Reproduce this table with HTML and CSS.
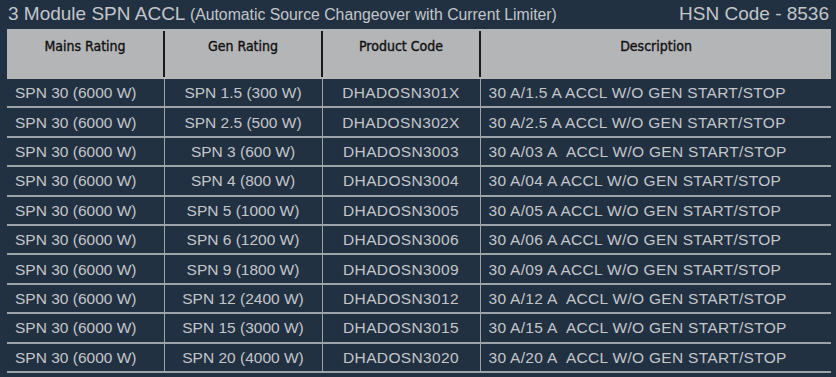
FILE: index.html
```html
<!DOCTYPE html>
<html>
<head>
<meta charset="utf-8">
<link rel="stylesheet" href="styles.css">
</head>
<body>
<div class="page">
  <div class="title-bar">
    <div class="title"><span class="big">3 Module SPN ACCL</span> <span class="small">(Automatic Source Changeover with Current Limiter)</span></div>
    <div class="hsn">HSN Code - 8536</div>
  </div>
  <table class="grid">
    <colgroup>
      <col class="c1"><col class="c2"><col class="c3"><col class="c4">
    </colgroup>
    <thead>
      <tr>
        <th><span class="th-in">Mains Rating</span></th>
        <th><span class="th-in">Gen Rating</span></th>
        <th><span class="th-in">Product Code</span></th>
        <th><span class="th-in">Description</span></th>
      </tr>
    </thead>
    <tbody>
      <tr><td class="l">SPN 30 (6000 W)</td><td>SPN 1.5 (300 W)</td><td class="code">DHADOSN301X</td><td class="l desc">30 A/1.5 A ACCL W/O GEN START/STOP</td></tr>
      <tr><td class="l">SPN 30 (6000 W)</td><td>SPN 2.5 (500 W)</td><td class="code">DHADOSN302X</td><td class="l desc">30 A/2.5 A ACCL W/O GEN START/STOP</td></tr>
      <tr><td class="l">SPN 30 (6000 W)</td><td>SPN 3 (600 W)</td><td class="code">DHADOSN3003</td><td class="l desc">30 A/03 A&nbsp; ACCL W/O GEN START/STOP</td></tr>
      <tr><td class="l">SPN 30 (6000 W)</td><td>SPN 4 (800 W)</td><td class="code">DHADOSN3004</td><td class="l desc">30 A/04 A ACCL W/O GEN START/STOP</td></tr>
      <tr><td class="l">SPN 30 (6000 W)</td><td>SPN 5 (1000 W)</td><td class="code">DHADOSN3005</td><td class="l desc">30 A/05 A ACCL W/O GEN START/STOP</td></tr>
      <tr><td class="l">SPN 30 (6000 W)</td><td>SPN 6 (1200 W)</td><td class="code">DHADOSN3006</td><td class="l desc">30 A/06 A ACCL W/O GEN START/STOP</td></tr>
      <tr><td class="l">SPN 30 (6000 W)</td><td>SPN 9 (1800 W)</td><td class="code">DHADOSN3009</td><td class="l desc">30 A/09 A ACCL W/O GEN START/STOP</td></tr>
      <tr><td class="l">SPN 30 (6000 W)</td><td>SPN 12 (2400 W)</td><td class="code">DHADOSN3012</td><td class="l desc">30 A/12 A&nbsp; ACCL W/O GEN START/STOP</td></tr>
      <tr><td class="l">SPN 30 (6000 W)</td><td>SPN 15 (3000 W)</td><td class="code">DHADOSN3015</td><td class="l desc">30 A/15 A&nbsp; ACCL W/O GEN START/STOP</td></tr>
      <tr><td class="l">SPN 30 (6000 W)</td><td>SPN 20 (4000 W)</td><td class="code">DHADOSN3020</td><td class="l desc">30 A/20 A&nbsp; ACCL W/O GEN START/STOP</td></tr>
    </tbody>
  </table>
</div>
</body>
</html>
```
FILE: styles.css
```css
html, body {
  margin: 0;
  padding: 0;
  background: #223142;
}
.page {
  width: 836px;
  height: 377px;
  background: #223142;
  font-family: "Liberation Sans", Arial, sans-serif;
  color: #c2c6ca;
  overflow: hidden;
}
.title-bar {
  display: flex;
  justify-content: space-between;
  align-items: baseline;
  padding: 3px 7px 0 8px;
  height: 25px;
  box-sizing: border-box;
}
.title .big {
  font-size: 19px;
}
.title .small {
  font-size: 15.8px;
}
.hsn {
  font-size: 19px;
}
.grid {
  margin-left: 7px;
  margin-top: 4px;
  width: 824px;
  border-collapse: collapse;
  table-layout: fixed;
}
.c1 { width: 157px; }
.c2 { width: 158px; }
.c3 { width: 158px; }
.c4 { width: 351px; }
thead th {
  background: #b3b5b7;
  height: 50px;
  padding: 0;
  vertical-align: top;
  position: relative;
  font-family: "Liberation Sans Narrow", "DejaVu Sans Condensed", "Liberation Sans", sans-serif;
  font-weight: normal;
  font-size: 14px;
  color: #111;
  text-align: center;
}
thead th + th {
  border-left: 2px solid #b3b5b7;
}
thead th + th::before {
  content: "";
  position: absolute;
  left: -2px;
  top: 2px;
  bottom: 2px;
  width: 2px;
  background: #1a1a1a;
}
.th-in {
  display: block;
  padding-top: 9px;
  -webkit-text-stroke: 0.35px #111;
}
tbody td {
  height: 26.4px;
  padding: 1px 0 0;
  font-size: 15.5px;
  text-align: center;
  vertical-align: middle;
  border-bottom: 2px solid #9ea3a8;
  white-space: nowrap;
}
tbody td + td {
  border-left: 1px solid #9ea3a8;
}
tbody td.l {
  text-align: left;
  padding-left: 8px;
}
tbody td.code {
  letter-spacing: 0.35px;
}
tbody td.desc {
  letter-spacing: 0.3px;
}
```
